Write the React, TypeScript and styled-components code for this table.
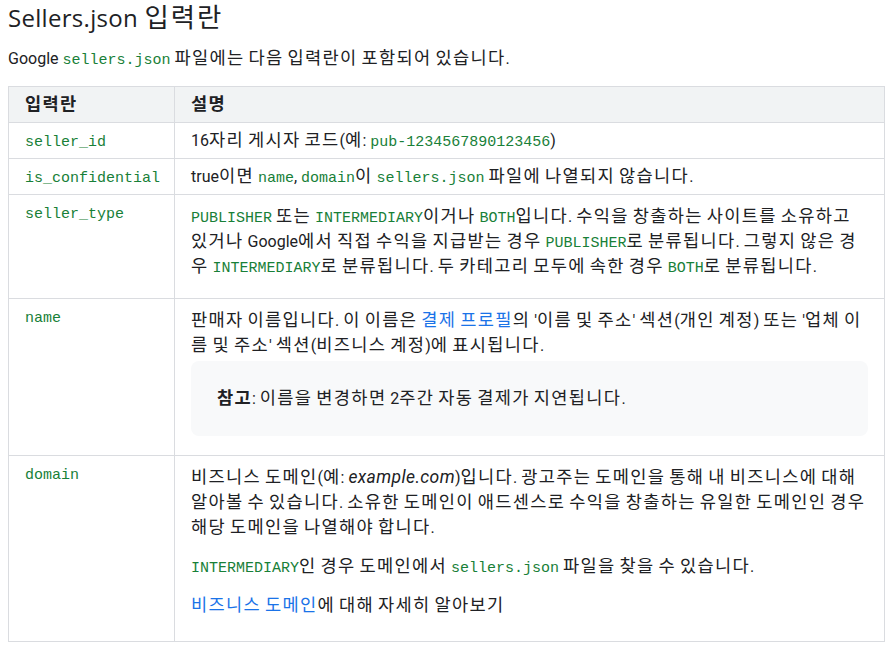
import React from "react";
import styled, { createGlobalStyle } from "styled-components";

const Global = createGlobalStyle`
  body {
    margin: 0;
    background: #fff;
    font-family: Roboto, "Noto Sans CJK KR", sans-serif;
    color: #202124;
  }
`;

const Page = styled.div`
  padding: 0 8px;
  width: 877px;
`;

const Title = styled.h2`
  margin: 0;
  font-family: "Open Sans", "Noto Sans CJK KR", sans-serif;
  font-size: 24px;
  font-weight: 400;
  letter-spacing: 0.3px;
  line-height: 36px;
  color: #202124;
`;

const Intro = styled.p`
  margin: 10px 0 15px;
  font-size: 16px;
  line-height: 25px;
`;

// Hangul runs are set a little larger and looser, as in the reference's Korean face
const Ko = styled.span`
  font-family: "Noto Sans CJK KR", sans-serif;
  font-size: 1.1em;
  letter-spacing: 0.075em;
  line-height: 1;
`;

const HANGUL = /([\uAC00-\uD7A3\u3131-\u318E]+)/;
const ko = (text: string) =>
  text.split(HANGUL).map((part, i) => (i % 2 ? <Ko key={i}>{part}</Ko> : part));

const Code = styled.code`
  font-family: "Liberation Mono", monospace;
  font-size: 15px;
  line-height: 1;
  color: #188038;
`;

const Em = styled.i`
  font-size: 17.5px;
  letter-spacing: 0.4px;
  line-height: 1;
`;

const Link = styled.a`
  color: #1a73e8;
  text-decoration: none;
`;

const Table = styled.table`
  width: 877px;
  table-layout: fixed;
  border-collapse: collapse;
  border: 1px solid #dadce0;
  font-size: 16px;
  line-height: 25px;
`;

const Th = styled.th`
  text-align: left;
  font-weight: 700;
  background: #f1f3f4;
  padding: 5px 16px;
  border: 1px solid #dadce0;
`;

const Td = styled.td`
  vertical-align: top;
  padding: 5px 16px;
  border: 1px solid #dadce0;
`;

const Para = styled.p<{ $mt?: number; $mb?: number }>`
  margin: ${(p) => p.$mt ?? 4}px 0 ${(p) => p.$mb ?? 14}px;
`;

const Note = styled.div`
  background: #f8f9fa;
  border-radius: 8px;
  padding: 25px 26px;
  margin-bottom: 14px;
`;

export default function App() {
  return (
    <Page>
      <Global />
      <Title>Sellers.json {ko("입력란")}</Title>
      <Intro>
        Google <Code>sellers.json</Code> {ko("파일에는 다음 입력란이 포함되어 있습니다.")}
      </Intro>
      <Table>
        <colgroup>
          <col style={{ width: 166 }} />
          <col />
        </colgroup>
        <thead>
          <tr>
            <Th>{ko("입력란")}</Th>
            <Th>{ko("설명")}</Th>
          </tr>
        </thead>
        <tbody>
          <tr>
            <Td>
              <Code>seller_id</Code>
            </Td>
            <Td>
              16{ko("자리 게시자 코드(예: ")}
              <Code>pub-1234567890123456</Code>)
            </Td>
          </tr>
          <tr>
            <Td>
              <Code>is_confidential</Code>
            </Td>
            <Td>
              true{ko("이면 ")}
              <Code>name</Code>, <Code>domain</Code>
              {ko("이 ")}
              <Code>sellers.json</Code> {ko("파일에 나열되지 않습니다.")}
            </Td>
          </tr>
          <tr>
            <Td>
              <Code>seller_type</Code>
            </Td>
            <Td>
              <Para>
                <Code>PUBLISHER</Code> {ko("또는 ")}
                <Code>INTERMEDIARY</Code>
                {ko("이거나 ")}
                <Code>BOTH</Code>
                {ko("입니다. 수익을 창출하는 사이트를 소유하고")}
                <br />
                {ko("있거나 ")}Google
                {ko("에서 직접 수익을 지급받는 경우 ")}
                <Code>PUBLISHER</Code>
                {ko("로 분류됩니다. 그렇지 않은 경")}
                <br />
                {ko("우 ")}
                <Code>INTERMEDIARY</Code>
                {ko("로 분류됩니다. 두 카테고리 모두에 속한 경우 ")}
                <Code>BOTH</Code>
                {ko("로 분류됩니다.")}
              </Para>
            </Td>
          </tr>
          <tr>
            <Td>
              <Code>name</Code>
            </Td>
            <Td>
              <Para $mb={3}>
                {ko("판매자 이름입니다. 이 이름은 ")}
                <Link href="#">{ko("결제 프로필")}</Link>
                {ko("의 '이름 및 주소' 섹션(개인 계정) 또는 '업체 이")}
                <br />
                {ko("름 및 주소' 섹션(비즈니스 계정)에 표시됩니다.")}
              </Para>
              <Note>
                <b>{ko("참고")}</b>: {ko("이름을 변경하면 ")}2{ko("주간 자동 결제가 지연됩니다.")}
              </Note>
            </Td>
          </tr>
          <tr>
            <Td>
              <Code>domain</Code>
            </Td>
            <Td>
              <Para>
                {ko("비즈니스 도메인(예: ")}
                <Em>example.com</Em>
                {ko(")입니다. 광고주는 도메인을 통해 내 비즈니스에 대해")}
                <br />
                {ko("알아볼 수 있습니다. 소유한 도메인이 애드센스로 수익을 창출하는 유일한 도메인인 경우")}
                <br />
                {ko("해당 도메인을 나열해야 합니다.")}
              </Para>
              <Para $mt={0}>
                <Code>INTERMEDIARY</Code>
                {ko("인 경우 도메인에서 ")}
                <Code>sellers.json</Code> {ko("파일을 찾을 수 있습니다.")}
              </Para>
              <Para $mt={0} $mb={18}>
                <Link href="#">{ko("비즈니스 도메인")}</Link>
                {ko("에 대해 자세히 알아보기")}
              </Para>
            </Td>
          </tr>
        </tbody>
      </Table>
    </Page>
  );
}
